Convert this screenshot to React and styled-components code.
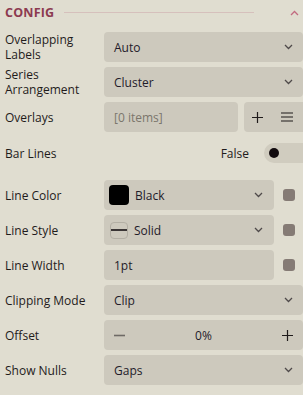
import styled, { createGlobalStyle } from "styled-components";

const GlobalStyle = createGlobalStyle`
  html, body {
    margin: 0;
    padding: 0;
    background: #e0ddd0;
  }
  body {
    font-family: "Open Sans", "Noto Sans", sans-serif;
    font-size: 12px;
    color: #1f1b1b;
    overflow: hidden;
  }
`;

const Panel = styled.div`
  width: 303px;
  height: 395px;
  padding: 0 0 0 5px;
  box-sizing: border-box;
  background: #e0ddd0;
`;

const Header = styled.div`
  display: flex;
  align-items: center;
  height: 25px;
  margin-bottom: 7px;
  gap: 10px;
`;

const Title = styled.span`
  color: #8c3a50;
  font-weight: 700;
  font-size: 12.5px;
  letter-spacing: 0.2px;
`;

const Rule = styled.div`
  flex: 1;
  height: 1px;
  background: #d6c0bc;
  margin-right: 21px;
`;

const Collapse = styled.div`
  width: 18px;
  display: flex;
  justify-content: center;
  color: #c26b80;
`;

const Rows = styled.div`
  display: flex;
  flex-direction: column;
  gap: 5px;
`;

const Row = styled.div`
  display: grid;
  grid-template-columns: 99px 1fr;
  align-items: center;
  min-height: ${({ $tall }) => ($tall ? 32 : 30)}px;
  margin-bottom: ${({ $extra }) => $extra || 0}px;
`;

const Label = styled.div`
  line-height: 15px;
`;

const Field = styled.div`
  display: flex;
  align-items: center;
  gap: 9px;
`;

const Box = styled.div`
  flex: 1;
  height: 30px;
  display: flex;
  align-items: center;
  background: #cdc9bd;
  border-radius: 4px;
  padding: 0 ${({ $pr }) => $pr ?? 10}px 0 ${({ $pl }) => $pl ?? 10}px;
  box-sizing: border-box;
  color: ${({ $muted }) => ($muted ? "#7b766c" : "#1f1b2a")};
  gap: 6px;
`;

const Value = styled.span`
  flex: 1;
  text-align: ${({ $center }) => ($center ? "center" : "left")};
`;

const Buttons = styled.div`
  width: 59px;
  height: 30px;
  background: #cdc9bd;
  border-radius: 4px 0 0 4px;
  display: flex;
  align-items: center;
  gap: 18px;
  padding-left: 8px;
  box-sizing: border-box;
  margin-left: -3px;
`;

const Dot = styled.div`
  width: 12px;
  height: 12px;
  border-radius: 3px;
  background: #857b75;
  margin-right: 8px;
`;

const ToggleWrap = styled.div`
  display: flex;
  align-items: center;
  justify-content: flex-end;
  gap: 15px;
`;

const Track = styled.div`
  width: 39px;
  height: 20px;
  border-radius: 10px 0 0 10px;
  background: #d0ccbf;
  display: flex;
  align-items: center;
  padding-left: 5px;
  box-sizing: border-box;
`;

const Knob = styled.div`
  width: 10px;
  height: 10px;
  border-radius: 50%;
  background: #120b0e;
`;

const Swatch = styled.div`
  width: 20px;
  height: 20px;
  border-radius: 4px;
  background: #000;
  margin-left: -5px;
`;

const StyleIcon = styled.div`
  width: 18px;
  height: 17px;
  border: 1px solid #b3afa4;
  border-radius: 4px;
  box-sizing: border-box;
  display: flex;
  align-items: center;
  margin-left: -4px;
  &::after {
    content: "";
    display: block;
    width: 100%;
    height: 2px;
    background: #3a3535;
  }
`;

const Chevron = ({ up, color = "#4f4a4a" }) => (
  <svg width="9" height="6" viewBox="0 0 9 6" fill="none">
    <path
      d={up ? "M1 5 L4.5 1.5 L8 5" : "M1 1 L4.5 4.5 L8 1"}
      stroke={color}
      strokeWidth="1.3"
    />
  </svg>
);

const Plus = ({ color = "#1f1b1b" }) => (
  <svg width="11" height="11" viewBox="0 0 11 11">
    <path d="M5.5 0 V11 M0 5.5 H11" stroke={color} strokeWidth="1.2" />
  </svg>
);

const Minus = () => (
  <svg width="11" height="11" viewBox="0 0 11 11">
    <path d="M0 5.5 H11" stroke="#6e6a66" strokeWidth="1.6" />
  </svg>
);

const Menu = () => (
  <svg width="12" height="10" viewBox="0 0 12 10">
    <path d="M0 1 H12 M0 5 H12 M0 9 H12" stroke="#1f1b1b" strokeWidth="1.1" />
  </svg>
);

const Select = ({ children, pr }) => (
  <Box $pr={pr}>
    <Value>{children}</Value>
    <Chevron />
  </Box>
);

export default function App() {
  return (
    <>
      <GlobalStyle />
      <Panel>
        <Header>
          <Title>CONFIG</Title>
          <Rule />
          <Collapse>
            <Chevron up color="#c26b80" />
          </Collapse>
        </Header>
        <Rows>
          <Row>
            <Label>
              Overlapping
              <br />
              Labels
            </Label>
            <Select>Auto</Select>
          </Row>
          <Row>
            <Label>
              Series
              <br />
              Arrangement
            </Label>
            <Select>Cluster</Select>
          </Row>
          <Row>
            <Label>Overlays</Label>
            <Field>
              <Box $muted>[0 items]</Box>
              <Buttons>
                <Plus />
                <Menu />
              </Buttons>
            </Field>
          </Row>
          <Row $tall $extra={6}>
            <Label>Bar Lines</Label>
            <ToggleWrap>
              <span>False</span>
              <Track>
                <Knob />
              </Track>
            </ToggleWrap>
          </Row>
          <Row>
            <Label>Line Color</Label>
            <Field>
              <Box $pr={11}>
                <Swatch />
                <Value>Black</Value>
                <Chevron />
              </Box>
              <Dot />
            </Field>
          </Row>
          <Row>
            <Label>Line Style</Label>
            <Field>
              <Box $pr={11}>
                <StyleIcon />
                <Value>Solid</Value>
                <Chevron />
              </Box>
              <Dot />
            </Field>
          </Row>
          <Row>
            <Label>Line Width</Label>
            <Field>
              <Box>1pt</Box>
              <Dot />
            </Field>
          </Row>
          <Row>
            <Label>Clipping Mode</Label>
            <Select>Clip</Select>
          </Row>
          <Row>
            <Label>Offset</Label>
            <Box $pl={10} $pr={10}>
              <Minus />
              <Value $center>0%</Value>
              <Plus />
            </Box>
          </Row>
          <Row>
            <Label>Show Nulls</Label>
            <Select>Gaps</Select>
          </Row>
        </Rows>
      </Panel>
    </>
  );
}
